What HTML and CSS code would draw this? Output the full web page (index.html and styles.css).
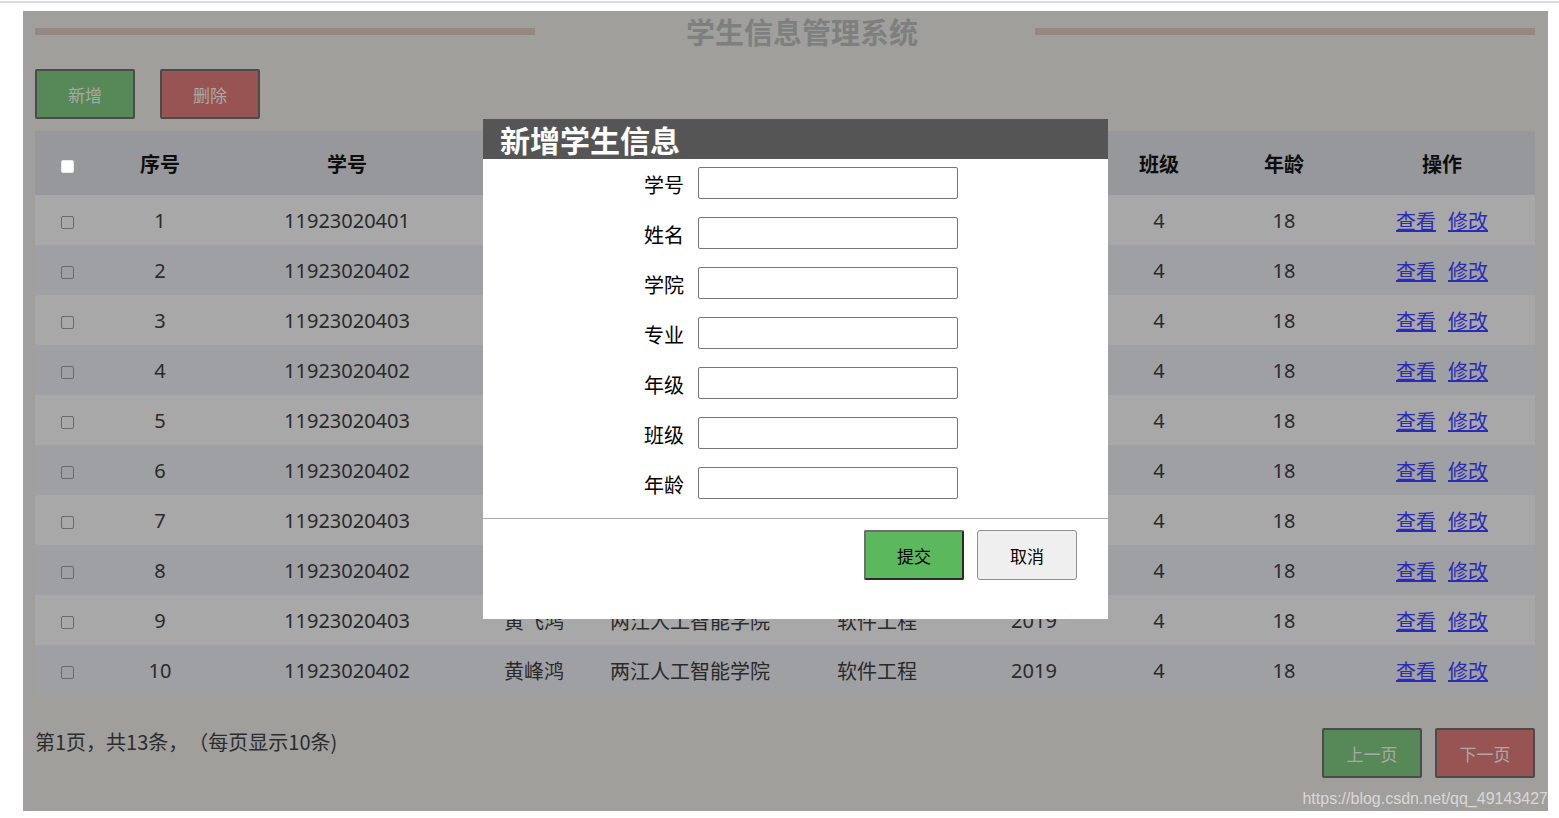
FILE: index.html
```html
<!DOCTYPE html>
<html lang="zh-CN">
<head>
<meta charset="utf-8">
<title>学生信息管理系统</title>
<link rel="stylesheet" href="styles.css">
</head>
<body>
<div class="topline"></div>
<div class="screen">
  <header class="title-bar">
    <span class="rule"></span>
    <h1 class="title">学生信息管理系统</h1>
    <span class="rule"></span>
  </header>

  <div class="actions">
    <button class="btn btn-green">新增</button>
    <button class="btn btn-red">删除</button>
  </div>

  <table class="grid">
    <colgroup>
      <col class="c-chk"><col class="c-no"><col class="c-id"><col class="c-name"><col class="c-college">
      <col class="c-major"><col class="c-grade"><col class="c-class"><col class="c-age"><col class="c-op">
    </colgroup>
    <thead>
      <tr>
        <th><input type="checkbox" class="chk chk-head"></th>
        <th>序号</th><th>学号</th><th>姓名</th><th>学院</th><th>专业</th><th>年级</th><th>班级</th><th>年龄</th><th>操作</th>
      </tr>
    </thead>
    <tbody>
      <tr><td><input type="checkbox" class="chk"></td><td>1</td><td>11923020401</td><td>黄峰鸿</td><td>两江人工智能学院</td><td>软件工程</td><td>2019</td><td>4</td><td>18</td><td><a href="#">查看</a><a href="#">修改</a></td></tr>
      <tr><td><input type="checkbox" class="chk"></td><td>2</td><td>11923020402</td><td>黄峰鸿</td><td>两江人工智能学院</td><td>软件工程</td><td>2019</td><td>4</td><td>18</td><td><a href="#">查看</a><a href="#">修改</a></td></tr>
      <tr><td><input type="checkbox" class="chk"></td><td>3</td><td>11923020403</td><td>黄飞鸿</td><td>两江人工智能学院</td><td>软件工程</td><td>2019</td><td>4</td><td>18</td><td><a href="#">查看</a><a href="#">修改</a></td></tr>
      <tr><td><input type="checkbox" class="chk"></td><td>4</td><td>11923020402</td><td>黄峰鸿</td><td>两江人工智能学院</td><td>软件工程</td><td>2019</td><td>4</td><td>18</td><td><a href="#">查看</a><a href="#">修改</a></td></tr>
      <tr><td><input type="checkbox" class="chk"></td><td>5</td><td>11923020403</td><td>黄飞鸿</td><td>两江人工智能学院</td><td>软件工程</td><td>2019</td><td>4</td><td>18</td><td><a href="#">查看</a><a href="#">修改</a></td></tr>
      <tr><td><input type="checkbox" class="chk"></td><td>6</td><td>11923020402</td><td>黄峰鸿</td><td>两江人工智能学院</td><td>软件工程</td><td>2019</td><td>4</td><td>18</td><td><a href="#">查看</a><a href="#">修改</a></td></tr>
      <tr><td><input type="checkbox" class="chk"></td><td>7</td><td>11923020403</td><td>黄飞鸿</td><td>两江人工智能学院</td><td>软件工程</td><td>2019</td><td>4</td><td>18</td><td><a href="#">查看</a><a href="#">修改</a></td></tr>
      <tr><td><input type="checkbox" class="chk"></td><td>8</td><td>11923020402</td><td>黄峰鸿</td><td>两江人工智能学院</td><td>软件工程</td><td>2019</td><td>4</td><td>18</td><td><a href="#">查看</a><a href="#">修改</a></td></tr>
      <tr><td><input type="checkbox" class="chk"></td><td>9</td><td>11923020403</td><td>黄飞鸿</td><td>两江人工智能学院</td><td>软件工程</td><td>2019</td><td>4</td><td>18</td><td><a href="#">查看</a><a href="#">修改</a></td></tr>
      <tr><td><input type="checkbox" class="chk"></td><td>10</td><td>11923020402</td><td>黄峰鸿</td><td>两江人工智能学院</td><td>软件工程</td><td>2019</td><td>4</td><td>18</td><td><a href="#">查看</a><a href="#">修改</a></td></tr>
    </tbody>
  </table>

  <div class="pager">
    <span class="pager-info">第1页，共13条，（每页显示10条)</span>
    <div class="pager-btns">
      <button class="btn btn-green">上一页</button>
      <button class="btn btn-red">下一页</button>
    </div>
  </div>

  <div class="watermark">https://blog.csdn.net/qq_49143427</div>

  <div class="modal">
    <div class="modal-head">新增学生信息</div>
    <form class="modal-form">
      <label class="field"><span class="field-label">学号</span><input type="text" class="field-input"></label>
      <label class="field"><span class="field-label">姓名</span><input type="text" class="field-input"></label>
      <label class="field"><span class="field-label">学院</span><input type="text" class="field-input"></label>
      <label class="field"><span class="field-label">专业</span><input type="text" class="field-input"></label>
      <label class="field"><span class="field-label">年级</span><input type="text" class="field-input"></label>
      <label class="field"><span class="field-label">班级</span><input type="text" class="field-input"></label>
      <label class="field"><span class="field-label">年龄</span><input type="text" class="field-input"></label>
    </form>
    <div class="modal-foot">
      <button class="mbtn mbtn-submit">提交</button>
      <button class="mbtn mbtn-cancel">取消</button>
    </div>
  </div>
</div>
</body>
</html>
```

FILE: styles.css
```css
html, body {
  margin: 0;
  background: #ffffff;
}
body {
  padding-top: 1px;
  font-family: "Noto Sans", "Noto Sans CJK SC", sans-serif;
}
.topline {
  height: 2px;
  background: #dcdcdc;
}
.screen {
  position: relative;
  margin: 8px 0 0 23px;
  width: 1525px;
  height: 800px;
  box-sizing: border-box;
  padding: 0 13px 0 12px;
  background: #a09f9c;
}

/* title */
.title-bar {
  display: flex;
  align-items: center;
  height: 41px;
}
.rule {
  flex: 0 0 500px;
  height: 7px;
  background: #958880;
}
.title {
  flex: 0 0 500px;
  box-sizing: border-box;
  padding-left: 34px;
  margin: 0;
  text-align: center;
  font-family: "Noto Sans CJK SC", sans-serif;
  font-weight: 700;
  font-size: 29px;
  line-height: 41px;
  color: #7e7f7f;
}

/* buttons */
.actions {
  display: flex;
  gap: 25px;
  margin-top: 17px;
}
.btn {
  width: 100px;
  height: 50px;
  box-sizing: border-box;
  border: 2px solid #4b4b4b;
  border-radius: 2px;
  font-family: "Noto Sans CJK SC", sans-serif;
  font-size: 17px;
  color: #a9a9a9;
  padding: 0;
}
.btn-green { background: #578857; }
.btn-red { background: #985452; }

/* table */
.grid {
  margin-top: 12px;
  width: 1500px;
  table-layout: fixed;
  border-collapse: collapse;
  font-size: 20px;
  color: #2a2a2a;
}
.c-chk { width: 64px; }
.c-no { width: 122px; }
.c-id { width: 252px; }
.c-name { width: 122px; }
.c-college { width: 190px; }
.c-major { width: 184px; }
.c-grade { width: 130px; }
.c-class { width: 120px; }
.c-age { width: 130px; }
.c-op { width: 186px; }
.grid th, .grid td {
  padding: 0;
  text-align: center;
  white-space: nowrap;
}
.grid thead tr {
  height: 64px;
  background: #97989b;
}
.grid th {
  font-family: "Noto Sans CJK SC", sans-serif;
  font-weight: 700;
  font-size: 20px;
  color: #0e0e0e;
}
.grid tbody tr {
  height: 50px;
}
.grid tbody tr:nth-child(odd) { background: #a8a8a8; }
.grid tbody tr:nth-child(even) { background: #9fa0a3; }
.grid a {
  color: #2b2bb5;
  text-decoration: underline;
  margin: 0 6px;
}
.chk {
  appearance: none;
  -webkit-appearance: none;
  width: 13px;
  height: 13px;
  margin: 0;
  box-sizing: border-box;
  border: 1px solid #6a6a6a;
  border-radius: 2px;
  background: transparent;
  vertical-align: middle;
}
.chk-head {
  background: #ffffff;
  border-color: #e8e8e8;
}

/* pager */
.pager {
  display: flex;
  justify-content: space-between;
  align-items: flex-start;
  margin-top: 33px;
}
.pager-info {
  font-family: "Noto Sans CJK SC", sans-serif;
  font-size: 20px;
  line-height: 28px;
  color: #2d2d2d;
  text-spacing-trim: space-all;
  font-feature-settings: "halt" 0, "chws" 0;
}
.pager-btns {
  display: flex;
  gap: 13px;
}

.watermark {
  position: absolute;
  right: 0;
  bottom: 3px;
  font-family: "Liberation Sans", Arial, sans-serif;
  font-size: 16px;
  line-height: 18px;
  color: #d8d8d7;
}

/* modal */
.modal {
  position: absolute;
  left: 460px;
  top: 108px;
  width: 625px;
  height: 500px;
  background: #ffffff;
}
.modal-head {
  height: 40px;
  background: #555555;
  padding-left: 17px;
  font-family: "Noto Sans CJK SC", sans-serif;
  font-weight: 700;
  font-size: 30px;
  line-height: 40px;
  color: #ffffff;
}
.modal-form {
  margin: 0;
  height: 360px;
  box-sizing: border-box;
  padding-top: 8px;
  border-bottom: 1px solid #a9a9a9;
}
.field {
  display: flex;
  align-items: center;
  height: 32px;
  margin-bottom: 18px;
}
.field-label {
  width: 201px;
  margin-right: 14px;
  padding-top: 3px;
  text-align: right;
  font-family: "Noto Sans CJK SC", sans-serif;
  font-size: 20px;
  line-height: 26px;
  color: #000000;
}
.field-input {
  width: 260px;
  height: 32px;
  box-sizing: border-box;
  margin: 0;
  border: 1px solid #767676;
  border-radius: 2px;
  background: #ffffff;
}
.modal-foot {
  display: flex;
  justify-content: flex-end;
  gap: 13px;
  padding: 11px 31px 0 0;
}
.mbtn {
  width: 100px;
  height: 50px;
  box-sizing: border-box;
  padding: 0;
  font-family: "Noto Sans CJK SC", sans-serif;
  font-size: 17px;
  color: #000000;
}
.mbtn-submit {
  background: #5cb85c;
  border: 2px solid;
  border-color: #6e6e6e #2a2a2a #2a2a2a #6e6e6e;
  border-radius: 2px;
}
.mbtn-cancel {
  background: #efefef;
  border: 1px solid #8f8f8f;
  border-radius: 3px;
}
```
